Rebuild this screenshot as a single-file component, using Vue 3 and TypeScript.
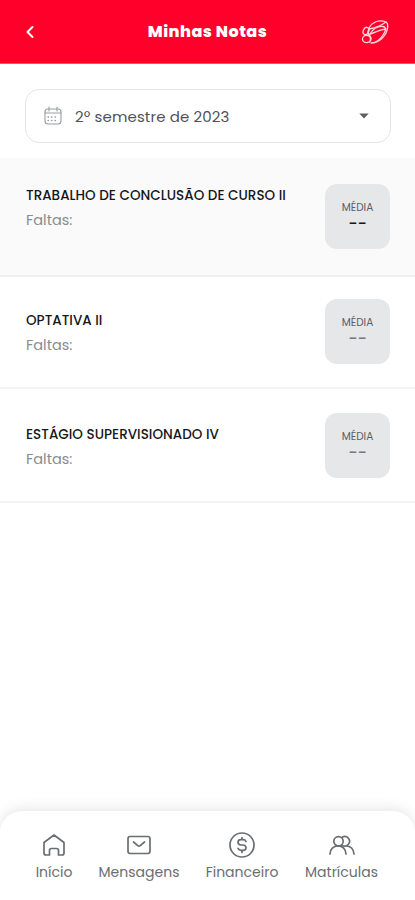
<script setup lang="ts">
interface Course {
  id: string
  name: string
  average: string
}

const courses: Course[] = [
  { id: 'thesis', name: 'TRABALHO DE CONCLUSÃO DE CURSO II', average: '--' },
  { id: 'elective', name: 'OPTATIVA II', average: '--' },
  { id: 'internship', name: 'ESTÁGIO SUPERVISIONADO IV', average: '--' },
]
</script>

<template>
  <div class="screen">
    <header class="header">
      <button class="back" aria-label="Voltar">
        <svg width="10" height="16" viewBox="0 0 10 16"><path d="M7.5 3 2.5 8l5 5" /></svg>
      </button>
      <h1 class="title">Minhas Notas</h1>
      <svg class="brand" width="30" height="30" viewBox="0 0 30 30">
        <path d="M9 11C12 5 19 2.5 25 4.5c2.500 1 3 4 2.500 6.500C26.500 19 19 26 11 26" />
        <path d="M9 12c5-1 11-2.500 17-7M10 17c5-1 9-4.500 16-5" />
        <path d="M10 17c3-5 8-8 13-7.500 3 .5 3 3 1.500 6-2 4-5 7.500-9 9.500" />
        <ellipse cx="6" cy="14" rx="2.700" ry="3.800" transform="rotate(25 6 14)" />
        <ellipse cx="6.500" cy="22" rx="4" ry="3.700" />
        <path d="M9 12c-2 3-1 5 1 7 1.500 2 1 4.500-.5 6" />
      </svg>
    </header>

    <main class="content">
      <button class="semester">
        <svg class="calendar" width="18" height="20" viewBox="0 0 18 20">
          <rect x="1" y="3" width="16" height="15" rx="3" />
          <path d="M1 7h16M5 1v4M13 1v4" />
          <path class="dots" d="M4 11h10M4 14.500h10" />
        </svg>
        <span class="semester-label">2º semestre de 2023</span>
        <svg class="caret" width="10" height="6" viewBox="0 0 10 6"><path d="M.3.500h9.400L5 5.500z" /></svg>
      </button>

      <section class="courses">
        <article v-for="course in courses" :key="course.id" class="course" :class="course.id">
          <div class="info">
            <h2 class="name">{{ course.name }}</h2>
            <p class="absences">Faltas:</p>
          </div>
          <div class="badge">
            <span class="badge-label">MÉDIA</span>
            <span class="badge-value">{{ course.average }}</span>
          </div>
        </article>
      </section>
    </main>

    <nav class="nav">
      <a class="tab home">
        <svg width="28" height="28" viewBox="0 0 28 28">
          <path d="M4 11.500 14 4l10 7.500V22q0 2-2 2h-3.500v-4.500q0-2-2-2h-5q-2 0-2 2V24H6q-2 0-2-2z" />
        </svg>
        <span>Início</span>
      </a>
      <a class="tab messages">
        <svg width="28" height="28" viewBox="0 0 28 28">
          <rect x="3" y="5.500" width="22" height="17" rx="2.200" />
          <path d="m8.500 11 4.300 3.700q1.200 1 2.400 0l4.300-3.700" />
        </svg>
        <span>Mensagens</span>
      </a>
      <a class="tab finance">
        <svg width="28" height="28" viewBox="0 0 28 28">
          <circle cx="14" cy="14" r="12" />
          <path d="M18 10.500c-.5-1.300-1.500-1.800-3-1.800h-2c-4 0-4 5 0 5.300h2c4 .3 4 5.300 0 5.300h-2c-1.500 0-2.500-.7-3-2M14 6.500v2M14 19.500v2" />
        </svg>
        <span>Financeiro</span>
      </a>
      <a class="tab enrolments">
        <svg width="28" height="28" viewBox="0 0 28 28">
          <circle cx="10.500" cy="10.300" r="4.700" />
          <path d="M14 6.500a4.700 4.700 0 1 1 0 7.600M2 23c0-5 3.500-8 8-8s8 3 8 8M18 15c4.500 0 7.500 3 8 8" />
        </svg>
        <span>Matrículas</span>
      </a>
    </nav>
  </div>
</template>

<style>
body {
  margin: 0;
  background: #fff;
}
</style>

<style scoped>
.screen {
  display: flex;
  flex-direction: column;
  height: 900px;
  overflow: hidden;
  background: #fff;
  font-family: Poppins, Inter, "Open Sans", sans-serif;
}

svg {
  display: block;
  flex: none;
  fill: none;
  stroke: currentColor;
  stroke-linecap: round;
  stroke-linejoin: round;
}

button {
  font: inherit;
  background: none;
  border: 0;
  padding: 0;
}

h1,
h2,
p {
  margin: 0;
}

.header {
  display: grid;
  grid-template-columns: 30px 1fr 30px;
  align-items: center;
  height: 64px;
  box-sizing: border-box;
  padding: 1px 25px 0;
  background: #ff002b;
  border-bottom: 1px solid #ff5145;
  color: #fff;
}

.back {
  color: #fff;
}

.back svg {
  stroke-width: 2;
}

.title {
  text-align: center;
  font-size: 16px;
  line-height: 24px;
  font-weight: 800;
  letter-spacing: 0.46px;
}

.brand {
  color: #ffdadd;
  stroke-width: 1.300;
}

.content {
  flex: 1;
}

.semester {
  display: flex;
  align-items: center;
  width: 366px;
  height: 54px;
  margin: 25px 0 15px 25px;
  padding: 0 21px 0 18px;
  box-sizing: border-box;
  border: 1.500px solid #e3e5e6;
  border-radius: 14px;
}

.calendar {
  color: #999da0;
  stroke-width: 1.100;
}

.dots {
  stroke-width: 1.300;
  stroke-dasharray: 0.5 3;
}

.semester-label {
  flex: 1;
  margin-left: 13px;
  text-align: left;
  font-size: 15px;
  letter-spacing: 0.12px;
  color: #4e5357;
}

.caret {
  fill: #5c6063;
  stroke: none;
}

.course {
  display: flex;
  justify-content: space-between;
  align-items: flex-start;
  box-sizing: border-box;
  padding: 0 25px 0 26px;
  border-bottom: 2px solid #f2f3f4;
}

.thesis {
  height: 119px;
  padding-top: 26px;
  background: #fafafa;
  border-color: #eeefef;
}

.elective {
  height: 112px;
  padding-top: 22px;
}

.internship {
  height: 114px;
  padding-top: 24px;
}

.info {
  width: 285px;
}

.elective .info,
.internship .info {
  padding-top: 12px;
}

.thesis .info {
  padding-top: 2px;
}

.name {
  font-size: 13.500px;
  line-height: 20px;
  font-weight: 500;
  color: #15171a;
  letter-spacing: 0.02px;
}

.absences {
  margin-top: 4px;
  font-size: 14.500px;
  line-height: 20px;
  color: #898d90;
}

.badge {
  display: flex;
  flex-direction: column;
  align-items: center;
  width: 65px;
  height: 65px;
  box-sizing: border-box;
  padding-top: 16px;
  border-radius: 12px;
  background: #e5e7e8;
}

.badge-label {
  font-size: 10.500px;
  line-height: 16px;
  color: #5b5f62;
}

.badge-value {
  font-size: 16px;
  line-height: 16px;
  font-weight: 500;
  color: #777b7e;
}

.thesis .badge-value {
  color: #15171a;
}

.nav {
  display: grid;
  grid-template-columns: 36px 80px 72px 73px;
  column-gap: 27px;
  height: 89px;
  box-sizing: border-box;
  padding: 20px 0 0 36px;
  border-radius: 22px 22px 0 0;
  background: #fff;
  box-shadow: 0 -2px 14px rgba(0, 0, 0, 0.1);
}

.tab {
  display: flex;
  flex-direction: column;
  align-items: center;
  color: #696e73;
  font-size: 14px;
  line-height: 20px;
  white-space: nowrap;
}

.tab svg {
  stroke-width: 1.700;
  margin-bottom: 3px;
}
</style>
